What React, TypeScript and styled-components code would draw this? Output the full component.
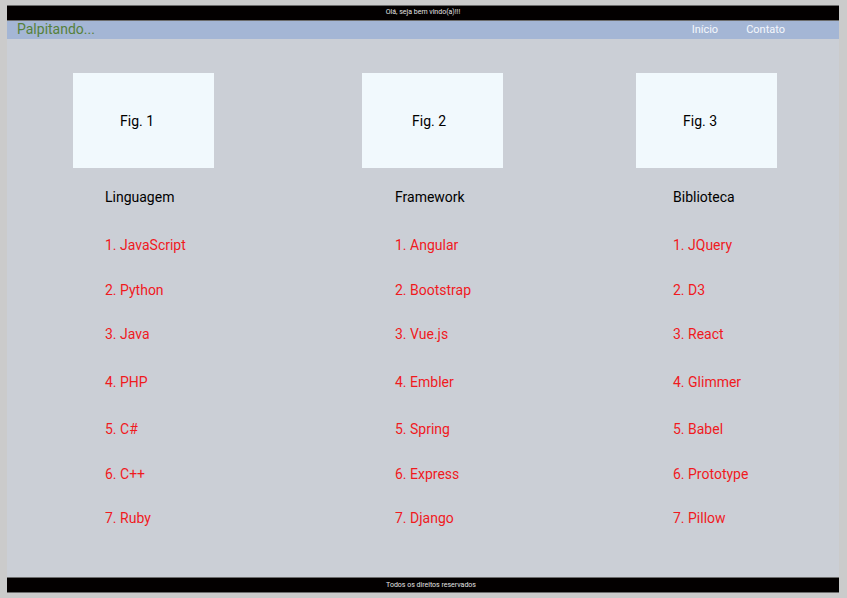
import React from "react";
import styled, { createGlobalStyle } from "styled-components";

const GlobalStyle = createGlobalStyle`
  *, *::before, *::after { box-sizing: border-box; }
  body {
    margin: 0;
    background: #cbcbcb;
    color: #000;
    font-family: Roboto, "Liberation Sans", sans-serif;
    font-size: 14px;
    line-height: 20px;
  }
`;

const Page = styled.div`
  display: flex;
  flex-direction: column;
  min-height: 100vh;
  padding: 5px 8px 5px 7px;
`;

const Strip = styled.div`
  flex: none;
  height: 16px;
  border-top: 1px solid #6c6c6c;
  border-bottom: 1px solid #6c6c6c;
  background: #030000;
  color: #e4e4e4;
  font-size: 7px;
  line-height: 12px;
  text-align: center;
`;

const FooterStrip = styled(Strip)`
  padding-left: 16px;
  line-height: 14px;
`;

const StripText = styled.p`
  margin: 0;
`;

const Header = styled.header`
  display: flex;
  flex: none;
  align-items: center;
  justify-content: space-between;
  height: 18px;
  padding: 0 54px 0 10px;
  background: #a4b6d5;
`;

const Brand = styled.h1`
  margin: 0;
  color: #56813b;
  font-size: 14px;
  font-weight: 400;
  line-height: 16px;
  height: 18px;
`;

const Nav = styled.nav`
  display: flex;
  gap: 28px;
`;

const NavLink = styled.a`
  color: #f5f8fd;
  font-size: 11px;
  line-height: 18px;
  text-decoration: none;
`;

const Main = styled.main`
  display: grid;
  flex: 1;
  grid-template-columns: 289fr 274fr 203fr;
  align-items: start;
  padding: 34px 0 48px 66px;
  background: #cbcfd6;
`;

const Column = styled.section`
  min-width: 0;
`;

const Figure = styled.div<{ $indent: number }>`
  display: flex;
  align-items: center;
  width: 141px;
  height: 95px;
  padding-left: ${({ $indent }) => $indent}px;
  background: #f1f9fd;
`;

const Listing = styled.div<{ $indent: number }>`
  padding-left: ${({ $indent }) => $indent}px;
`;

const Title = styled.h2`
  margin: 19px 0 28px;
  font-size: 14px;
  font-weight: 400;
  line-height: 20px;
`;

const Items = styled.ol`
  display: grid;
  grid-template-rows: 45px 44px 48px 47px 45px 44px 20px;
  margin: 0;
  padding: 0;
  color: #f01a1e;
  list-style: none;
`;

const columns = [
  {
    figure: "Fig. 1",
    figureIndent: 47,
    title: "Linguagem",
    indent: 32,
    items: ["JavaScript", "Python", "Java", "PHP", "C#", "C++", "Ruby"],
  },
  {
    figure: "Fig. 2",
    figureIndent: 50,
    title: "Framework",
    indent: 33,
    items: ["Angular", "Bootstrap", "Vue.js", "Embler", "Spring", "Express", "Django"],
  },
  {
    figure: "Fig. 3",
    figureIndent: 47,
    title: "Biblioteca",
    indent: 37,
    items: ["JQuery", "D3", "React", "Glimmer", "Babel", "Prototype", "Pillow"],
  },
];

export default function App() {
  return (
    <>
      <GlobalStyle />
      <Page>
        <Strip>
          <StripText>Olá, seja bem vindo(a)!!!</StripText>
        </Strip>
        <Header>
          <Brand>Palpitando...</Brand>
          <Nav>
            <NavLink href="#inicio">Início</NavLink>
            <NavLink href="#contato">Contato</NavLink>
          </Nav>
        </Header>
        <Main>
          {columns.map((column) => (
            <Column key={column.title}>
              <Figure $indent={column.figureIndent}>{column.figure}</Figure>
              <Listing $indent={column.indent}>
                <Title>{column.title}</Title>
                <Items>
                  {column.items.map((item, index) => (
                    <li key={item}>{`${index + 1}. ${item}`}</li>
                  ))}
                </Items>
              </Listing>
            </Column>
          ))}
        </Main>
        <FooterStrip as="footer">
          <StripText>Todos os direitos reservados</StripText>
        </FooterStrip>
      </Page>
    </>
  );
}
